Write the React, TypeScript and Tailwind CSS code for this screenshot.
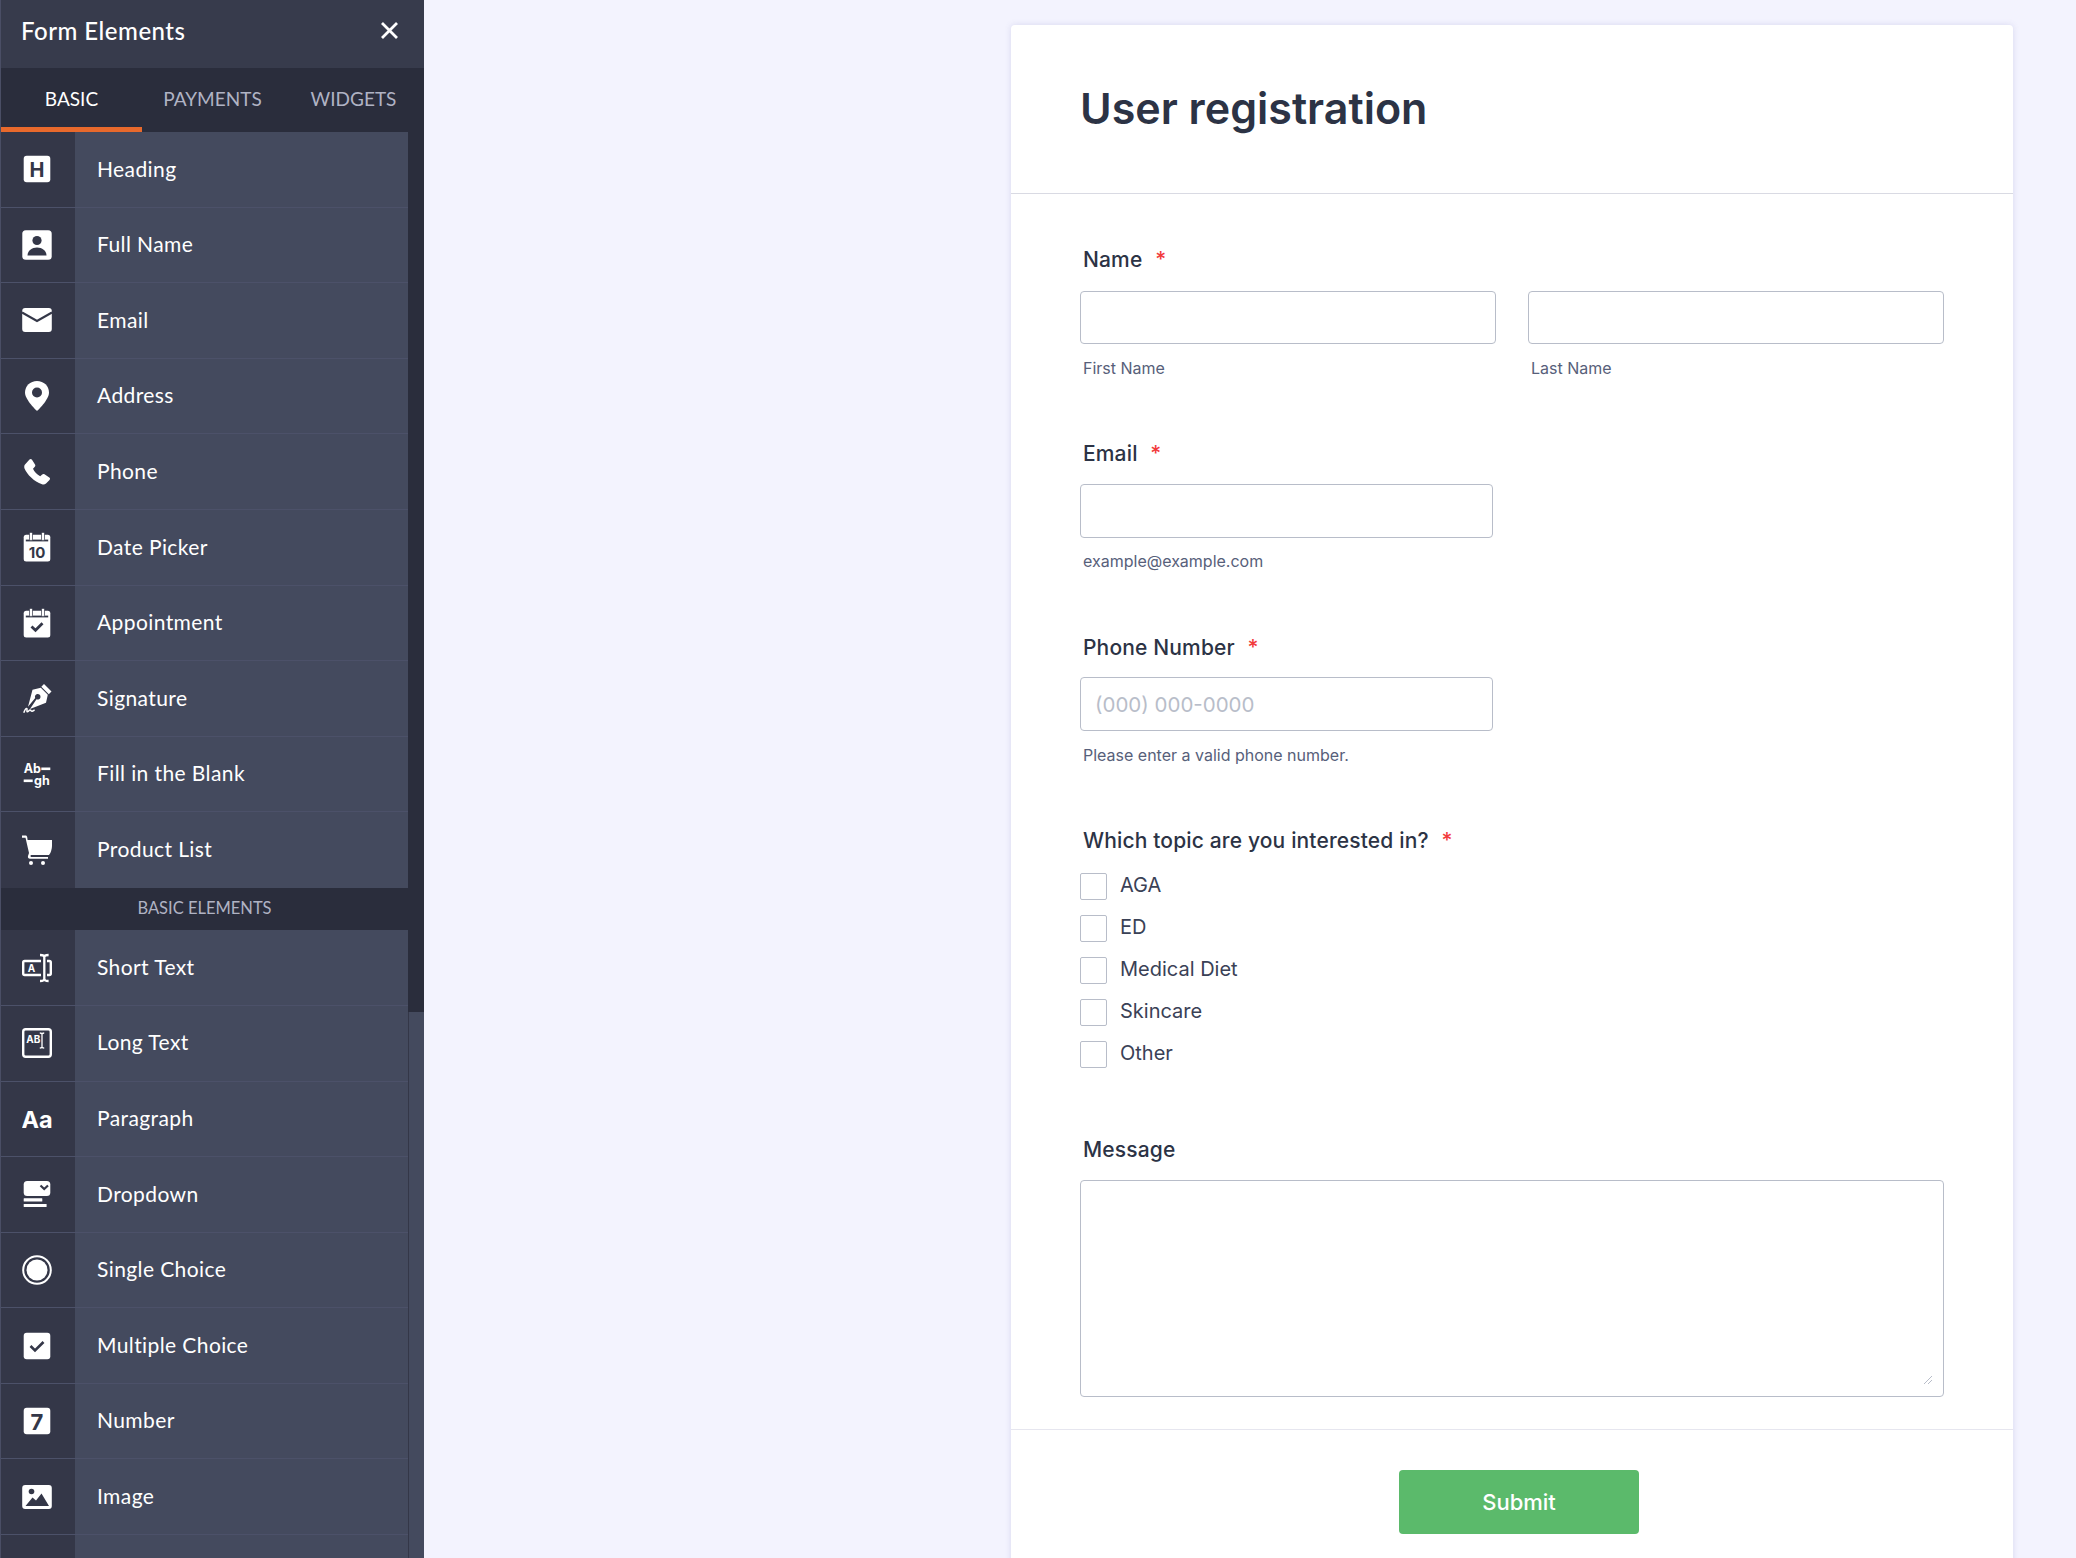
import React from "react";

const D = "#343748";

const T = ({ x, y, s, c = D, children }: { x: number; y: number; s: number; c?: string; children: string }) => (
  <text x={x} y={y} fontSize={s} fill={c} textAnchor="middle" className="font-['Inter'] font-bold">
    {children}
  </text>
);

const Calendar = ({ children }: { children: React.ReactNode }) => (
  <>
    <rect x="1.7" y="2.8" width="26.600" height="26.800" rx="2.500" fill="#fff" />
    <rect x="3.800" y="7.600" width="22.400" height="1.800" fill={D} />
    <rect x="7.500" y="0.400" width="3" height="8" rx="1" fill="#fff" stroke={D} strokeWidth="0.700" />
    <rect x="19.500" y="0.400" width="3" height="8" rx="1" fill="#fff" stroke={D} strokeWidth="0.700" />
    {children}
  </>
);

const icons: Record<string, React.ReactNode> = {
  Heading: (
    <>
      <rect x="1.700" y="1.700" width="26.600" height="26.600" rx="3" fill="#fff" />
      <T x={15} y={22.500} s={20}>H</T>
    </>
  ),
  "Full Name": (
    <>
      <rect x="0.300" y="0.300" width="29.400" height="29.400" rx="3.500" fill="#fff" />
      <circle cx="15" cy="10.500" r="4.600" fill={D} />
      <path d="M5.500 25.500c0-5 4.500-8 9.500-8s9.500 3 9.500 8z" fill={D} />
    </>
  ),
  Email: (
    <>
      <rect x="0.200" y="3" width="29.600" height="24" rx="3" fill="#fff" />
      <path d="M0 7.500 15 16 30 7.500" fill="none" stroke={D} strokeWidth="2.200" />
    </>
  ),
  Address: (
    <>
      <path d="M15 0C8.200 0 3 5 3 11.500 3 19 15 30 15 30s12-11 12-18.500C27 5 21.800 0 15 0z" fill="#fff" />
      <circle cx="15" cy="11.500" r="5" fill={D} />
    </>
  ),
  Phone: (
    <path
      d="M3 7.500 7.500 2.500c.8-.8 1.800-.7 2.500.2l3 4.800c.5.800.4 1.600-.2 2.300l-1.800 2c1.300 3.200 4 5.900 7.200 7.400l2-1.800c.7-.6 1.500-.7 2.300-.2l4.800 3.300c.9.7 1 1.700.2 2.500l-3.500 3.500c-1 1-2.500 1.300-4 .8C12 24.500 5 17.500 2.500 11.500c-.4-1.500-.4-3 .5-4z"
      fill="#fff"
    />
  ),
  "Date Picker": (
    <Calendar>
      <T x={15} y={26} s={15}>10</T>
    </Calendar>
  ),
  Appointment: (
    <Calendar>
      <path d="m9.500 18.500 4 3.800 7-7" fill="none" stroke={D} strokeWidth="2.800" />
    </Calendar>
  ),
  Signature: (
    <>
      <path d="M22 1 29.500 8.500 26.800 11.200 19.300 3.700z" fill="#fff" />
      <path d="M18.800 4.800 25.800 11.800 24 19.800 8 26 14.500 16.300a2.800 2.800 0 1 0-1.300-1.300L6 23.700 10.500 6.800z" fill="#fff" />
      <path d="M1.800 29.700c1-3 2-4.500 3-4.300.9.200-.5 3.300.5 3.400s1.800-2 2.800-1.800 1 1.300 2 1.200 1.500-.8 2.500-1.200" fill="none" stroke="#fff" strokeWidth="1.500" />
    </>
  ),
  "Fill in the Blank": (
    <>
      <text x="1.700" y="13.500" fontSize="12.500" fill="#fff" className="font-['Inter'] font-bold">Ab</text>
      <rect x="19.300" y="8.500" width="9" height="2.600" fill="#fff" />
      <rect x="1.700" y="20.500" width="9" height="2.600" fill="#fff" />
      <text x="12" y="25.500" fontSize="12.500" fill="#fff" className="font-['Inter'] font-bold">gh</text>
    </>
  ),
  "Product List": (
    <>
      <path d="M0 .5h3.500c1 0 1.500.6 1.700 1.500L5.600 5H30v5.500c0 4-1.500 8-3 9.500H9.500c-.8 0-1 .5-1 1s.3 1 1 1H26v1.800H8C6.500 23.800 5.500 22.500 6 21L7 18 3.500 2.800H0z" fill="#fff" />
      <circle cx="9" cy="28" r="2" fill="#fff" />
      <circle cx="21" cy="28" r="2" fill="#fff" />
    </>
  ),
  "Short Text": (
    <>
      <path d="M19 8H2.700C1.700 8 1.200 8.500 1.200 9.500v11c0 1 .5 1.500 1.500 1.500H19" fill="none" stroke="#fff" strokeWidth="2.400" />
      <path d="M25 8h2.300c1 0 1.500.5 1.500 1.500v11c0 1-.5 1.500-1.500 1.500H25" fill="none" stroke="#fff" strokeWidth="2.400" />
      <T x={9.500} y={19} s={10} c="#fff">A</T>
      <path d="M18 2c2.500 0 4.300.5 4.300 2v22c0 1.500-1.800 2-4.300 2M26.600 2c-2.500 0-4.300.5-4.300 2v22c0 1.500 1.800 2 4.300 2" fill="none" stroke="#fff" strokeWidth="2.300" />
    </>
  ),
  "Long Text": (
    <>
      <rect x="1.200" y="1.200" width="27.600" height="27.600" rx="2.500" fill="none" stroke="#fff" strokeWidth="2.400" />
      <text x="4.300" y="15" fontSize="10" fill="#fff" className="font-['Inter'] font-bold">AB</text>
      <path d="M17.800 5c1.500 0 2.200.3 2.200 1.300v12.400c0 1-.7 1.300-2.200 1.300M22.200 5c-1.500 0-2.200.3-2.200 1.300v12.400c0 1 .7 1.300 2.200 1.300" fill="none" stroke="#fff" strokeWidth="1.300" />
    </>
  ),
  Paragraph: <T x={15} y={24} s={23.500} c="#fff">Aa</T>,
  Dropdown: (
    <>
      <rect x="1.700" y="2" width="26.600" height="15" rx="3.500" fill="#fff" />
      <path d="m18.500 6.500 3.700 3.500 3.800-3.500" fill="none" stroke={D} strokeWidth="2.200" />
      <rect x="1.700" y="19.200" width="18.600" height="3.300" rx="0.500" fill="#fff" />
      <rect x="1.700" y="25" width="22.900" height="3" rx="0.500" fill="#fff" />
    </>
  ),
  "Single Choice": (
    <>
      <circle cx="15" cy="15" r="13.800" fill="none" stroke="#fff" strokeWidth="2" />
      <circle cx="15" cy="15" r="10.500" fill="#fff" />
    </>
  ),
  "Multiple Choice": (
    <>
      <rect x="1.700" y="1.700" width="26.600" height="26.600" rx="3" fill="#fff" />
      <path d="m8.500 15 4.500 4.500 8.500-8.500" fill="none" stroke={D} strokeWidth="2.600" />
    </>
  ),
  Number: (
    <>
      <rect x="1.700" y="1.700" width="26.600" height="26.600" rx="3" fill="#fff" />
      <T x={15} y={24} s={22}>7</T>
    </>
  ),
  Image: (
    <>
      <rect x="0.200" y="3" width="29.600" height="24" rx="3" fill="#fff" />
      <circle cx="9.500" cy="9.500" r="2.800" fill={D} />
      <path d="M3.500 24 10.500 15.500 14 18.500 19.500 11.500 27 24z" fill={D} />
    </>
  ),
};

const basic = ["Heading", "Full Name", "Email", "Address", "Phone", "Date Picker", "Appointment", "Signature", "Fill in the Blank", "Product List"];
const elements = ["Short Text", "Long Text", "Paragraph", "Dropdown", "Single Choice", "Multiple Choice", "Number", "Image", ""];

const Row = ({ label, last }: { label: string; last?: boolean }) => (
  <div className={"flex h-[75.6px] shrink-0 " + (last ? "" : "border-b border-[#4c5169]")}>
    <div className="flex w-[74px] shrink-0 items-center justify-center bg-[#343748] pr-[2px]">
      {icons[label] && <svg width="30" height="30" viewBox="0 0 30 30">{icons[label]}</svg>}
    </div>
    <div className="flex flex-1 items-center bg-[#444a5e] pb-[2px] pl-[22px] font-['Lato'] text-[21px] tracking-[0.4px] text-white">{label}</div>
  </div>
);

const Req = () => <span className="ml-[7px] text-[#f23a3c]">*</span>;

const Label = ({ children }: { children: React.ReactNode }) => (
  <div className="ml-[3px] h-[30px] text-[21px] leading-[30px] font-medium tracking-[0.15px] text-[#2c3345]">{children}</div>
);

const Sub = ({ children }: { children: string }) => (
  <div className="ml-[3px] h-[24px] text-[16px] leading-[24px] text-[#57607a]">{children}</div>
);

const inputCls = "block w-full rounded-[4px] border border-[#b8bdc9] bg-white px-[14px] text-[20.5px] outline-none placeholder:text-[#b8bdc9]";

export default function App() {
  return (
    <div className="flex h-[1558px] w-[2076px] overflow-hidden bg-[#f3f3fe] font-['Inter',sans-serif]">
      <aside className="flex h-full w-[424px] shrink-0 flex-col overflow-hidden border-l border-[#4a4e65] bg-[#444a5e]">
        <div className="flex h-[68px] shrink-0 items-center justify-between bg-[#373b4c] pr-[26px] pb-[7px] pl-[20px]">
          <span className="font-['Lato'] text-[24px] font-medium tracking-[0.5px] text-white">Form Elements</span>
          <svg width="17" height="17" viewBox="0 0 17 17">
            <path d="M1 1 16 16M16 1 1 16" stroke="#fff" strokeWidth="2.800" />
          </svg>
        </div>
        <div className="grid h-[64px] shrink-0 grid-cols-3 bg-[#2a2d3c] font-['Lato'] text-[19px]">
          <div className="flex items-center justify-center border-b-[5px] border-[#e8692c] pt-[3px] text-white">BASIC</div>
          <div className="flex items-center justify-center pb-[2px] text-[#b0b3c4]">PAYMENTS</div>
          <div className="flex items-center justify-center pb-[2px] text-[#b0b3c4]">WIDGETS</div>
        </div>
        <div className="flex min-h-0 flex-1">
          <div className="flex w-[407px] shrink-0 flex-col">
            {basic.map((l, i) => (
              <Row key={l} label={l} last={i === basic.length - 1} />
            ))}
            <div className="flex h-[42.4px] shrink-0 items-center justify-center bg-[#2a2d3c] pb-[1px] font-['Lato'] text-[16.500px] text-[#b0b3c4]">BASIC ELEMENTS</div>
            {elements.map((l) => (
              <Row key={l} label={l} />
            ))}
          </div>
          <div className="flex flex-1 flex-col">
            <div className="h-[880px] shrink-0 bg-[#2a2d3c]" />
            <div className="flex-1 border-l border-[#343748]" />
          </div>
        </div>
      </aside>

      <main className="min-w-0 flex-1 pt-[25px] pl-[587px]">
        <div className="w-[1002px] rounded-t-[4px] bg-white shadow-[0_0_6px_rgba(100,100,170,0.18)]">
          <div className="flex h-[169px] items-center border-b border-[#d9dae3] pb-[2px] pl-[69px]">
            <h1 className="text-[43px] font-semibold text-[#2c3345]">User registration</h1>
          </div>
          <div className="flex flex-col px-[69px] pt-[51px]">
            <Label>
              Name <Req />
            </Label>
            <div className="mt-[16px] grid grid-cols-2 gap-[32px]">
              <div>
                <input className={inputCls + " h-[53px]"} />
                <div className="mt-[12px]"><Sub>First Name</Sub></div>
              </div>
              <div>
                <input className={inputCls + " h-[53px]"} />
                <div className="mt-[12px]"><Sub>Last Name</Sub></div>
              </div>
            </div>

            <div className="mt-[59px]">
              <Label>
                Email <Req />
              </Label>
            </div>
            <div className="mt-[15px] w-[413px]"><input className={inputCls + " h-[54px]"} /></div>
            <div className="mt-[11px]"><Sub>example@example.com</Sub></div>

            <div className="mt-[60px]">
              <Label>
                Phone Number <Req />
              </Label>
            </div>
            <div className="mt-[14px] w-[413px]"><input className={inputCls + " h-[54px]"} placeholder="(000) 000-0000" /></div>
            <div className="mt-[12px]"><Sub>Please enter a valid phone number.</Sub></div>

            <div className="mt-[59px]">
              <Label>
                Which topic are you interested in? <Req />
              </Label>
            </div>
            <div className="mt-[17px] flex flex-col gap-[15px]">
              {["AGA", "ED", "Medical Diet", "Skincare", "Other"].map((o) => (
                <label key={o} className="flex h-[27px] gap-[13px]">
                  <input type="checkbox" className="h-[27px] w-[27px] shrink-0 appearance-none rounded-[2px] border border-[#b8bdc9] bg-white" />
                  <span className="mt-[-2px] text-[20px] leading-[28px] text-[#3a4156]">{o}</span>
                </label>
              ))}
            </div>

            <div className="mt-[67px]"><Label>Message</Label></div>
            <div className="relative mt-[15px]">
              <textarea className="block h-[217px] w-full resize-none rounded-[4px] border border-[#b8bdc9] bg-white outline-none" />
              <svg width="10" height="10" viewBox="0 0 10 10" className="absolute right-[11px] bottom-[12px]">
                <path d="M1 9 9 1M5 9 9 5" stroke="#b8bdc9" strokeWidth="1" />
              </svg>
            </div>
          </div>
          <div className="mt-[32px] flex h-[400px] justify-center border-t border-[#e6e6ef] pt-[40px] pl-[14px]">
            <button className="h-[64px] w-[240px] rounded-[4px] bg-[#5bba6b] text-[22px] font-medium text-white">Submit</button>
          </div>
        </div>
      </main>
    </div>
  );
}
